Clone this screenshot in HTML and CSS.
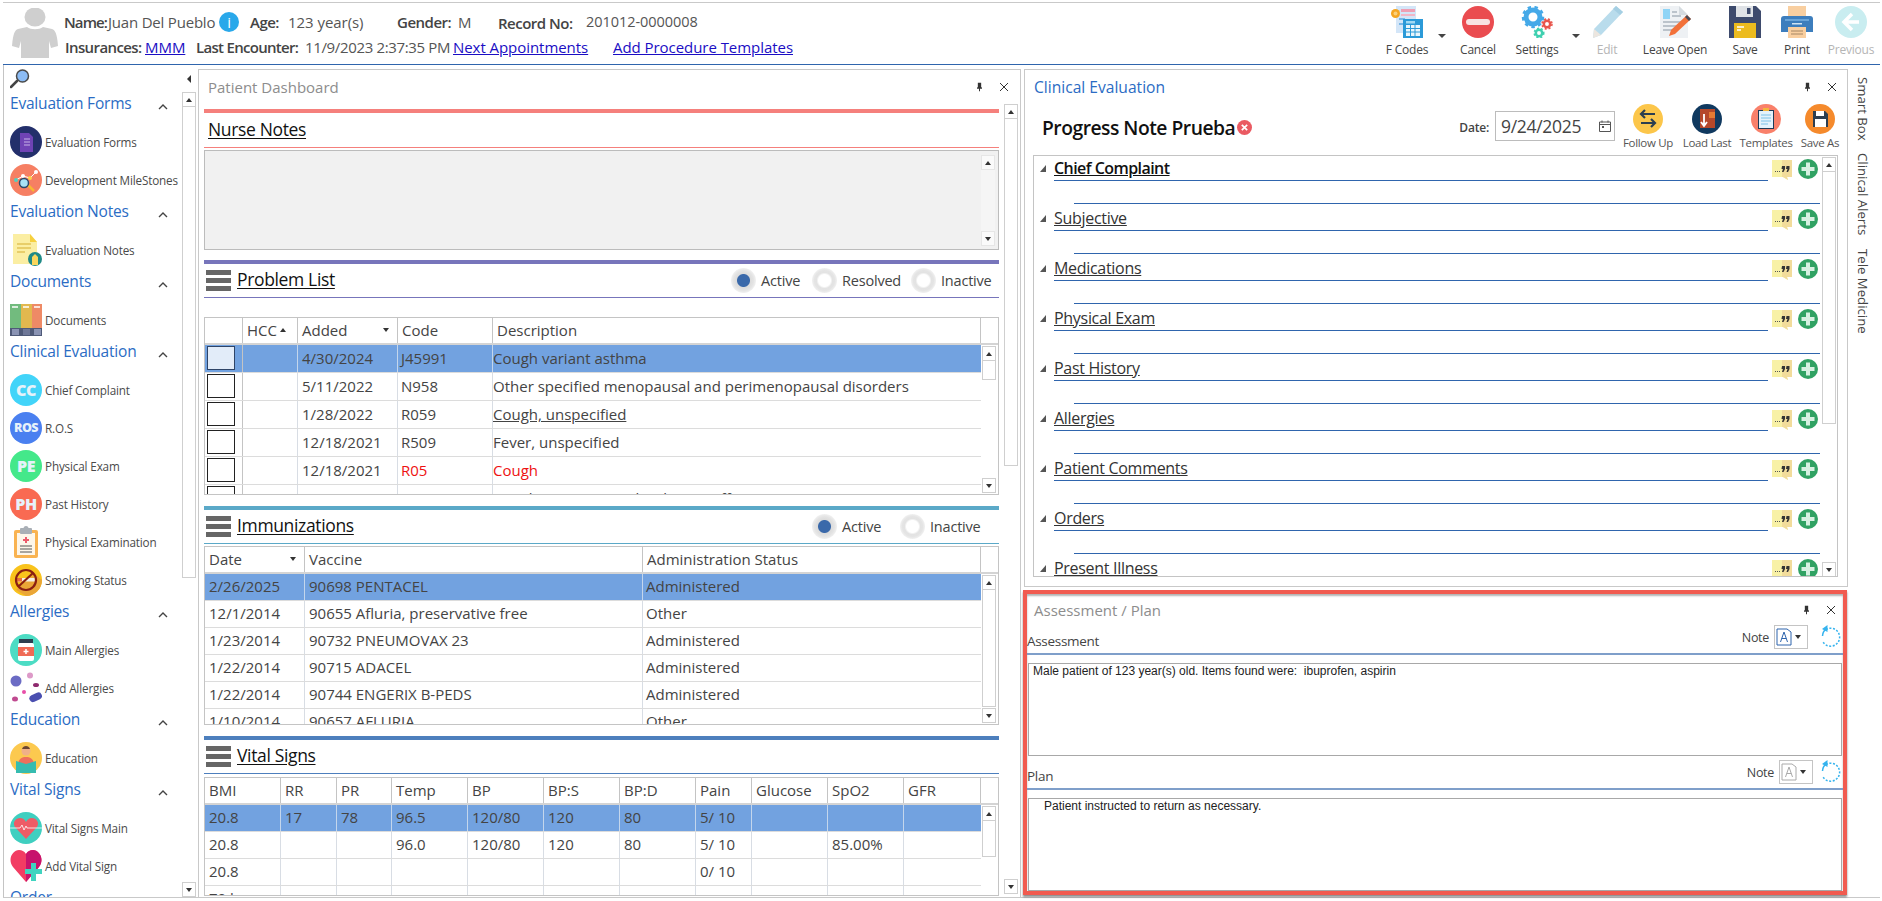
FILE: index.html
```html
<!DOCTYPE html>
<html lang="en">
<head>
<meta charset="utf-8">
<title>Patient Chart</title>
<link rel="stylesheet" href="styles.css">
</head>
<body>
<svg class="defs" width="0" height="0" aria-hidden="true">
  <symbol id="pin" viewBox="0 0 10 12"><path d="M3 1h4v5l1 1v1H5.600v3H4.400V8H2V7l1-1z" fill="#333"/></symbol>
  <symbol id="close" viewBox="0 0 10 10"><path d="M1 1l8 8M9 1L1 9" stroke="#333" stroke-width="1"/></symbol>
  <symbol id="chev" viewBox="0 0 10 6"><path d="M1 5l4-4 4 4" fill="none" stroke="#444" stroke-width="1.400"/></symbol>
  <symbol id="quote" viewBox="0 0 20 20"><path d="M0 0h20v17h-5l1 3-5-3H0z" fill="#f8f1a6"/><path d="M10 0h10v17h-5l1 3-5-3h-1z" fill="#f2dc9b"/><path d="M3 11h1v1H3zm2 0h1v1H5zm2 0h1v1H7z" fill="#555"/><path d="M10 6h3v3l-1.500 3h-1.500l1-3h-1.500zM14.500 6h3v3l-1.500 3h-1.500l1-3h-1.500z" fill="#333"/></symbol>
  <symbol id="plus" viewBox="0 0 20 20"><circle cx="10" cy="10" r="10" fill="#30a263"/><path d="M8 3.500h4V8h4.500v4H12v4.500H8V12H3.500V8H8z" fill="#d6f1e2"/></symbol>
  <symbol id="refresh" viewBox="0 0 22 24"><path d="M6 4.500A9 9 0 1 1 3 17" fill="none" stroke="#35b3ee" stroke-width="1.500" stroke-dasharray="2 1.600"/><path d="M7 3.500A9 9 0 0 0 2.500 11" fill="none" stroke="#35b3ee" stroke-width="1.500"/><path d="M7.500 0v7L2 4z" fill="#35b3ee"/></symbol>
</svg>
<div class="app">
  <header class="topbar">
    <svg class="avatar" viewBox="0 0 46 50"><ellipse cx="23" cy="9" rx="10.500" ry="9.500" fill="#cfcfcf"/><path d="M15 19c4 3 12 3 16 0l9 2c3 1 5 4 6 17l-7 2-2-7v17H9V33l-2 7-7-2C1 25 3 22 6 21z" fill="#cfcfcf"/></svg>
    <div class="patient">
      <div class="pline pline-top">
        <span class="lab lab-name">Name:</span><span class="val val-name">Juan Del Pueblo</span>
        <span class="info">i</span>
        <span class="lab lab-age">Age:</span><span class="val val-age">123 year(s)</span>
        <span class="lab lab-gender">Gender:</span><span class="val val-m">M</span>
        <span class="lab lab-rec">Record No:</span><span class="val val-rec">201012-0000008</span>
      </div>
      <div class="pline pline-bot">
        <span class="lab lab-ins">Insurances:</span><a class="lnk lnk-mmm" href="#">MMM</a>
        <span class="lab lab-last">Last Encounter:</span><span class="val val-date">11/9/2023 2:37:35 PM</span>
        <a class="lnk lnk-next" href="#">Next Appointments</a>
        <a class="lnk" href="#">Add Procedure Templates</a>
      </div>
    </div>
    <nav class="tools">
      <div class="tool t-fcodes">
        <svg viewBox="0 0 32 32"><rect x="5" y="0" width="20" height="27" fill="#d4e6f8"/><rect x="10" y="3" width="14" height="3" fill="#ef9fb4"/><rect x="10" y="8" width="14" height="2" fill="#f2b6c6"/><rect x="8" y="12" width="6" height="2" fill="#7bb7e6"/><rect x="8" y="17" width="6" height="2" fill="#7bb7e6"/><rect x="12" y="13" width="20" height="19" fill="#2b9ad8"/><rect x="15" y="19" width="14" height="11" fill="#e9f6fc"/><path d="M19.500 19v11M24 19v11M15 22.500h14M15 26h14" stroke="#2b9ad8"/><rect x="15" y="15" width="9" height="2.500" fill="#9fd8f3"/><circle cx="4.500" cy="7.500" r="4.500" fill="#f5a623"/><circle cx="4.500" cy="7.500" r="2" fill="#fbd07a"/></svg>
        <span>F Codes</span>
      </div>
      <i class="caret c-f"></i>
      <div class="tool t-cancel">
        <svg viewBox="0 0 32 32"><circle cx="16" cy="16" r="16" fill="#ea4c50"/><rect x="4" y="13" width="24" height="6" rx="3" fill="#f8e3e3"/></svg>
        <span>Cancel</span>
      </div>
      <div class="tool t-settings">
        <svg viewBox="0 0 32 32"><circle cx="12" cy="11" r="7" fill="none" stroke="#45a9e8" stroke-width="5"/><circle cx="12" cy="11" r="10" fill="none" stroke="#45a9e8" stroke-width="2.500" stroke-dasharray="3.500 3.400"/><circle cx="26" cy="18" r="3.200" fill="none" stroke="#e8564d" stroke-width="2.500"/><circle cx="26" cy="18" r="5" fill="none" stroke="#e8564d" stroke-width="1.500" stroke-dasharray="2 2"/><circle cx="18" cy="27" r="3.200" fill="none" stroke="#3fd0b0" stroke-width="2.500"/><circle cx="18" cy="27" r="4.800" fill="none" stroke="#3fd0b0" stroke-width="1.500" stroke-dasharray="2 2"/></svg>
        <span>Settings</span>
      </div>
      <i class="caret c-s"></i>
      <div class="tool t-edit tool-off">
        <svg viewBox="0 0 32 32"><path d="M25 0l7 6L10 29l-8 3 1-9z" fill="#b9dcec"/><path d="M25 0l7 6-3 3-7-6z" fill="#a5cfe3"/><path d="M3 23l7 6-8 3z" fill="#ece6df"/></svg>
        <span>Edit</span>
      </div>
      <div class="tool t-leave">
        <svg viewBox="0 0 32 32"><path d="M1 0h19l9 9v23H1z" fill="#eef1f4"/><path d="M20 0l9 9h-9z" fill="#d5dbe0"/><rect x="4" y="3" width="7" height="10" fill="#8ed4f6"/><path d="M4 16h18M4 20h14M4 24h10M13 6h5M13 10h9" stroke="#aab4bd" stroke-width="1.500"/><path d="M28 9l4 4-16 15-6 2 2-6z" fill="#f2713a"/><path d="M26 11l4 4 2-2-4-4z" fill="#4a4a55"/></svg>
        <span>Leave Open</span>
      </div>
      <div class="tool t-save">
        <svg viewBox="0 0 32 32"><path d="M0 0h27l5 5v27H0z" fill="#3e4b6d"/><rect x="7" y="0" width="17" height="11" fill="#dfe2e6"/><rect x="18" y="2" width="3.500" height="6" fill="#3e4b6d"/><rect x="5" y="17" width="22" height="15" fill="#ecbb1e"/><path d="M8 21h7M8 24h4" stroke="#fff" stroke-width="1.500"/></svg>
        <span>Save</span>
      </div>
      <div class="tool t-print">
        <svg viewBox="0 0 32 32"><rect x="7" y="0" width="18" height="12" fill="#f9cfa0"/><path d="M0 13c0-2 1-3 3-3h26c2 0 3 1 3 3v13H0z" fill="#3d7ebd"/><rect x="4" y="13" width="24" height="2" fill="#6aa5d9"/><rect x="11" y="17" width="10" height="1.500" fill="#cfe3f3"/><rect x="7" y="21" width="18" height="11" fill="#f9cfa0"/><path d="M10 25h12M10 28h12" stroke="#a58664"/></svg>
        <span>Print</span>
      </div>
      <div class="tool t-prev tool-off">
        <svg viewBox="0 0 32 32"><circle cx="16" cy="16" r="16" fill="#c9edf0"/><path d="M17 8l-8 8 8 8M9 16h15" fill="none" stroke="#fff" stroke-width="3.500"/></svg>
        <span>Previous</span>
      </div>
    </nav>
  </header>

  <main class="main">
    <aside class="side">
      <div class="side-top">
        <svg class="search" viewBox="0 0 20 20"><path d="M7 12l-6 6" stroke="#444" stroke-width="2.500" stroke-linecap="round"/><circle cx="12.500" cy="7" r="6" fill="#8cbcf5" stroke="#4a4a4a" stroke-width="1.500"/></svg>
        <i class="side-collapse"></i>
      </div>
      <div class="side-body">
        <div class="navlist">
          <div class="nav-head"><span>Evaluation Forms</span><svg class="chev"><use href="#chev"/></svg></div>
          <div class="nav-item"><svg class="nico" viewBox="0 0 32 32"><circle cx="16" cy="16" r="16" fill="#232f6b"/><path d="M10 7h9l4 4v15H10z" fill="#6f43b5"/><path d="M14 13h6M14 16h6M14 19h6" stroke="#c8b4e8"/></svg><span>Evaluation Forms</span></div>
          <div class="nav-item"><svg class="nico" viewBox="0 0 32 32"><circle cx="16" cy="16" r="16" fill="#f67f63"/><path d="M6 16l7-4 7 2 6-6" fill="none" stroke="#fff"/><circle cx="6" cy="16" r="2" fill="#50d0c0"/><circle cx="13" cy="12" r="2" fill="#fff"/><circle cx="20" cy="14" r="2" fill="#ffd24a"/><circle cx="26" cy="8" r="2" fill="#fff"/><path d="M18 21l6 6" stroke="#f7b733" stroke-width="2.500"/><circle cx="14" cy="19" r="4.500" fill="#a8e2f5" stroke="#2b4a6b" stroke-width="1.500"/></svg><span>Development MileStones</span></div>

          <div class="nav-head"><span>Evaluation Notes</span><svg class="chev"><use href="#chev"/></svg></div>
          <div class="nav-item"><svg class="nico" viewBox="0 0 32 32"><path d="M3 0h17l7 8v22H3z" fill="#fbeea3"/><path d="M20 0l7 8h-7z" fill="#f6d03f"/><path d="M7 10h14M7 14h14M7 18h8" stroke="#e2c458" stroke-width="1.500"/><circle cx="25" cy="25" r="7" fill="#1f8a86"/><path d="M22 31v-8l3-3 3 3v8z" fill="#f9d65c"/></svg><span>Evaluation Notes</span></div>

          <div class="nav-head"><span>Documents</span><svg class="chev"><use href="#chev"/></svg></div>
          <div class="nav-item"><svg class="nico" viewBox="0 0 32 32"><rect width="11" height="24" fill="#72bb7e"/><rect x="11" width="11" height="24" fill="#e2b84e"/><rect x="22" width="10" height="24" fill="#ee8a66"/><rect y="24" width="32" height="8" fill="#4f5a78"/><path d="M2 3h6M13 3h6M24 3h6" stroke="#fff" stroke-width="1.500"/><rect x="2" y="25" width="7" height="6" fill="#8a93b3"/><rect x="13" y="25" width="7" height="6" fill="#6f7898"/><rect x="24" y="25" width="7" height="6" fill="#8a93b3"/></svg><span>Documents</span></div>

          <div class="nav-head"><span>Clinical Evaluation</span><svg class="chev"><use href="#chev"/></svg></div>
          <div class="nav-item"><span class="badge b-cc">CC</span><span>Chief Complaint</span></div>
          <div class="nav-item"><span class="badge b-ros">ROS</span><span>R.O.S</span></div>
          <div class="nav-item"><span class="badge b-pe">PE</span><span>Physical Exam</span></div>
          <div class="nav-item"><span class="badge b-ph">PH</span><span>Past History</span></div>
          <div class="nav-item"><svg class="nico" viewBox="0 0 32 32"><rect x="4" y="4" width="24" height="28" rx="2" fill="#f9b351"/><rect x="7" y="7" width="18" height="22" fill="#fdf6ea"/><rect x="10" y="2" width="12" height="6" rx="1" fill="#a9afb6"/><circle cx="16" cy="2.500" r="2.500" fill="#a9afb6"/><path d="M16 11v6M13 14h6" stroke="#ec5b6c" stroke-width="2"/><path d="M10 20h12M10 23h12M10 26h12" stroke="#555"/></svg><span>Physical Examination</span></div>
          <div class="nav-item"><svg class="nico" viewBox="0 0 32 32"><circle cx="16" cy="16" r="16" fill="#f9c31c"/><path d="M16 32a16 16 0 0 0 16-16l-8-6L6 26z" fill="#eaa637"/><rect x="5" y="14" width="22" height="3.500" fill="#f5f0e6"/><rect x="5" y="14" width="7" height="3.500" fill="#e8703a"/><circle cx="16" cy="16" r="10" fill="none" stroke="#8a1f12" stroke-width="2.200"/><path d="M9 22L23 9" stroke="#8a1f12" stroke-width="2.200"/></svg><span>Smoking Status</span></div>

          <div class="nav-head"><span>Allergies</span><svg class="chev"><use href="#chev"/></svg></div>
          <div class="nav-item"><svg class="nico" viewBox="0 0 32 32"><circle cx="16" cy="16" r="16" fill="#4cdcc4"/><rect x="9" y="5" width="14" height="4" fill="#2c3e50"/><rect x="8" y="9" width="16" height="18" rx="2" fill="#fff"/><rect x="8" y="13" width="16" height="9" fill="#ef6a55"/><path d="M16 15v5M13.500 17.500h5" stroke="#fff" stroke-width="1.500"/></svg><span>Main Allergies</span></div>
          <div class="nav-item"><svg class="nico" viewBox="0 0 32 32"><circle cx="6" cy="9" r="5.500" fill="#6b6bc4"/><circle cx="20" cy="3.500" r="3" fill="#dd9ac8"/><ellipse cx="26" cy="13" rx="3" ry="2" fill="#8e2a6e"/><circle cx="14" cy="20" r="2" fill="#e84fa8"/><ellipse cx="5" cy="27" rx="3" ry="2.500" fill="#c04a90"/><rect x="19" y="22" width="13" height="7" rx="3.500" transform="rotate(-25 25 25)" fill="#4a4fb0"/></svg><span>Add Allergies</span></div>

          <div class="nav-head"><span>Education</span><svg class="chev"><use href="#chev"/></svg></div>
          <div class="nav-item"><svg class="nico" viewBox="0 0 32 32"><circle cx="16" cy="16" r="16" fill="#fcc94f"/><circle cx="16" cy="9" r="4.500" fill="#f0b088"/><path d="M12 7c1-4 7-4 8 0z" fill="#6b4630"/><path d="M8 23c0-6 4-8 8-8s8 2 8 8z" fill="#ee6f5c"/><path d="M6 19l10 3 10-3v12H6z" fill="#36bcb0"/></svg><span>Education</span></div>

          <div class="nav-head"><span>Vital Signs</span><svg class="chev"><use href="#chev"/></svg></div>
          <div class="nav-item"><svg class="nico" viewBox="0 0 32 32"><circle cx="16" cy="16" r="16" fill="#3fcfc0"/><path d="M16 27L5 15c-3-5 1-9 5-9 3 0 5 2 6 4 1-2 3-4 6-4 4 0 8 4 5 9z" fill="#ee5b66"/><path d="M0 16h10l2-3 2 5 2-4 1 2h15" fill="none" stroke="#fff" stroke-width=".8"/></svg><span>Vital Signs Main</span></div>
          <div class="nav-item"><svg class="nico" viewBox="0 0 32 32"><path d="M16 32L3 17C-3 9 3 0 9 0c3 0 5 1 7 4 2-3 4-4 7-4 6 0 12 9 6 17z" fill="#f23d63"/><path d="M16 32V4c2-3 4-4 7-4 6 0 12 9 6 17z" fill="#c7136c"/><path d="M21 13h5v6h6v5h-6v7h-5v-7h-6v-5h6z" fill="#3fd4c0"/></svg><span>Add Vital Sign</span></div>

          <div class="nav-head"><span>Order</span><svg class="chev"><use href="#chev"/></svg></div>
        </div>
        <div class="sb sb-side"><b class="sb-up"></b><b class="sb-thumb th-side"></b><b class="sb-track"></b><b class="sb-down"></b></div>
      </div>
    </aside>

    <section class="panel dash">
      <div class="panel-head">
        <span class="panel-title">Patient Dashboard</span>
        <svg class="pin"><use href="#pin"/></svg><svg class="x"><use href="#close"/></svg>
      </div>
      <div class="dash-body">
        <div class="dash-content">
          <div class="block b-nurse">
            <div class="bhead"><span class="btitle">Nurse Notes</span></div>
            <div class="nursebox"><div class="sb sb-nurse"><b class="sb-up"></b><b class="sb-track"></b><b class="sb-down"></b></div></div>
          </div>

          <div class="block b-prob">
            <div class="bhead">
              <span class="burger"><i></i><i></i><i></i></span><span class="btitle">Problem List</span>
              <div class="radios">
                <span class="radio on"></span><span class="rl rl-a">Active</span>
                <span class="radio"></span><span class="rl rl-r">Resolved</span>
                <span class="radio"></span><span class="rl rl-i">Inactive</span>
              </div>
            </div>
            <div class="tbl tbl-prob">
              <div class="thead g-prob"><span></span><span class="sorted">HCC<i class="tri-up"></i></span><span class="sorted">Added<i class="tri-dn"></i></span><span>Code</span><span>Description</span><span></span></div>
              <div class="tbody">
                <div class="rows">
                  <div class="tr g-prob sel"><span><i class="chk"></i></span><span></span><span>4/30/2024</span><span>J45991</span><span>Cough variant asthma</span></div>
                  <div class="tr g-prob"><span><i class="chk"></i></span><span></span><span>5/11/2022</span><span>N958</span><span>Other specified menopausal and perimenopausal disorders</span></div>
                  <div class="tr g-prob"><span><i class="chk"></i></span><span></span><span>1/28/2022</span><span>R059</span><span class="ul">Cough, unspecified</span></div>
                  <div class="tr g-prob"><span><i class="chk"></i></span><span></span><span>12/18/2021</span><span>R509</span><span>Fever, unspecified</span></div>
                  <div class="tr g-prob"><span><i class="chk"></i></span><span></span><span>12/18/2021</span><span class="red">R05</span><span class="red">Cough</span></div>
                  <div class="tr g-prob"><span><i class="chk"></i></span><span></span><span>5/16/2019</span><span>I340</span><span>Nonrheumatic mitral (valve) insufficiency</span></div>
                </div>
                <div class="sb sb-tbl"><b class="sb-up"></b><b class="sb-thumb th-prob"></b><b class="sb-track"></b><b class="sb-down"></b></div>
              </div>
            </div>
          </div>

          <div class="block b-imm">
            <div class="bhead">
              <span class="burger"><i></i><i></i><i></i></span><span class="btitle">Immunizations</span>
              <div class="radios">
                <span class="radio on"></span><span class="rl rl-a2">Active</span>
                <span class="radio"></span><span class="rl rl-i2">Inactive</span>
              </div>
            </div>
            <div class="tbl tbl-imm">
              <div class="thead g-imm"><span class="sorted">Date<i class="tri-dn"></i></span><span>Vaccine</span><span class="th-status">Administration Status</span><span></span></div>
              <div class="tbody">
                <div class="rows">
                  <div class="tr g-imm sel"><span>2/26/2025</span><span>90698 PENTACEL</span><span>Administered</span></div>
                  <div class="tr g-imm"><span>12/1/2014</span><span>90655 Afluria, preservative free</span><span>Other</span></div>
                  <div class="tr g-imm"><span>1/23/2014</span><span>90732 PNEUMOVAX 23</span><span>Administered</span></div>
                  <div class="tr g-imm"><span>1/22/2014</span><span>90715 ADACEL</span><span>Administered</span></div>
                  <div class="tr g-imm"><span>1/22/2014</span><span>90744 ENGERIX B-PEDS</span><span>Administered</span></div>
                  <div class="tr g-imm"><span>1/10/2014</span><span>90657 AFLURIA</span><span>Other</span></div>
                </div>
                <div class="sb sb-tbl"><b class="sb-up"></b><b class="sb-thumb th-imm"></b><b class="sb-track"></b><b class="sb-down"></b></div>
              </div>
            </div>
          </div>

          <div class="block b-vit">
            <div class="bhead">
              <span class="burger"><i></i><i></i><i></i></span><span class="btitle">Vital Signs</span>
            </div>
            <div class="tbl tbl-vit">
              <div class="thead g-vit"><span>BMI</span><span>RR</span><span>PR</span><span>Temp</span><span>BP</span><span>BP:S</span><span>BP:D</span><span>Pain</span><span>Glucose</span><span>SpO2</span><span>GFR</span><span></span></div>
              <div class="tbody">
                <div class="rows">
                  <div class="tr g-vit sel"><span>20.8</span><span>17</span><span>78</span><span>96.5</span><span>120/80</span><span>120</span><span>80</span><span>5/ 10</span><span></span><span></span><span></span></div>
                  <div class="tr g-vit"><span>20.8</span><span></span><span></span><span>96.0</span><span>120/80</span><span>120</span><span>80</span><span>5/ 10</span><span></span><span>85.00%</span><span></span></div>
                  <div class="tr g-vit"><span>20.8</span><span></span><span></span><span></span><span></span><span></span><span></span><span>0/ 10</span><span></span><span></span><span></span></div>
                  <div class="tr g-vit"><span>70 kg</span><span></span><span></span><span></span><span></span><span></span><span></span><span></span><span></span><span></span><span></span></div>
                </div>
                <div class="sb sb-vit"><b class="sb-up"></b><b class="sb-thumb th-vit"></b><b class="sb-track"></b></div>
              </div>
            </div>
          </div>
        </div>
        <div class="sb sb-dash"><b class="sb-up"></b><b class="sb-thumb th-dash"></b><b class="sb-track"></b><b class="sb-down"></b></div>
      </div>
    </section>

    <div class="rightcol">
      <section class="panel clin">
        <div class="panel-head">
          <span class="panel-title blue">Clinical Evaluation</span>
          <svg class="pin"><use href="#pin"/></svg><svg class="x"><use href="#close"/></svg>
        </div>
        <div class="clin-bar">
          <span class="note-name">Progress Note Prueba</span>
          <svg class="xcirc" viewBox="0 0 14 14"><circle cx="7" cy="7" r="7" fill="#ea5a62"/><path d="M4.500 4.500l5 5M9.500 4.500l-5 5" stroke="#fff" stroke-width="1.600"/></svg>
          <div class="clin-tools">
            <span class="date-lab">Date:</span>
            <div class="datebox"><span>9/24/2025</span><svg viewBox="0 0 12 12"><path d="M.5 2h11v9.500H.5zM.5 4.500h11M3 .5v2M9 .5v2" fill="none" stroke="#555"/><rect x="3" y="6" width="2" height="2" fill="#555"/></svg></div>
            <div class="act a-wide"><svg viewBox="0 0 30 30"><circle cx="15" cy="15" r="15" fill="#fcc64a"/><path d="M22 10H9m3-4l-4 4 4 4M8 19h13m-3-4l4 4-4 4" fill="none" stroke="#2c3e50" stroke-width="2.200"/></svg><span>Follow Up</span></div>
            <div class="act a-wide"><svg viewBox="0 0 30 30"><circle cx="15" cy="15" r="15" fill="#10395f"/><rect x="8" y="5" width="15" height="19" fill="#b5482a"/><rect x="17" y="8" width="6" height="6" fill="#e57a33"/><path d="M12 10v11m-3-3l3 4 3-4" fill="none" stroke="#fff" stroke-width="1.800"/></svg><span>Load Last</span></div>
            <div class="act a-wide"><svg viewBox="0 0 30 30"><circle cx="15" cy="15" r="15" fill="#f9806a"/><rect x="7" y="6" width="16" height="19" fill="#1f3b57"/><rect x="8" y="7" width="14" height="17" fill="#e4f2fb"/><rect x="12" y="4" width="6" height="3" fill="#f4b63c"/><path d="M10 11h10M10 14h10M10 17h10M10 20h7" stroke="#7cc2e8"/></svg><span>Templates</span></div>
            <div class="act a-last"><svg viewBox="0 0 30 30"><circle cx="15" cy="15" r="15" fill="#f58a2c"/><path d="M8 7h12l3 3v13H8z" fill="#2c3e50"/><rect x="11" y="7" width="8" height="5" fill="#fff"/><rect x="10" y="15" width="11" height="8" fill="#fff"/></svg><span>Save As</span></div>
          </div>
        </div>
        <div class="cat-box">
          <div class="cats">
            <div class="cat first"><i class="tri"></i><span class="cat-t"><u>Chief Complaint</u></span><svg class="q"><use href="#quote"/></svg><svg class="p"><use href="#plus"/></svg><div class="cat-l"></div></div>
            <div class="cat"><i class="tri"></i><span class="cat-t"><u>Subjective</u></span><svg class="q"><use href="#quote"/></svg><svg class="p"><use href="#plus"/></svg><div class="cat-l"></div></div>
            <div class="cat"><i class="tri"></i><span class="cat-t"><u>Medications</u></span><svg class="q"><use href="#quote"/></svg><svg class="p"><use href="#plus"/></svg><div class="cat-l"></div></div>
            <div class="cat"><i class="tri"></i><span class="cat-t"><u>Physical Exam</u></span><svg class="q"><use href="#quote"/></svg><svg class="p"><use href="#plus"/></svg><div class="cat-l"></div></div>
            <div class="cat"><i class="tri"></i><span class="cat-t"><u>Past History</u></span><svg class="q"><use href="#quote"/></svg><svg class="p"><use href="#plus"/></svg><div class="cat-l"></div></div>
            <div class="cat"><i class="tri"></i><span class="cat-t"><u>Allergies</u></span><svg class="q"><use href="#quote"/></svg><svg class="p"><use href="#plus"/></svg><div class="cat-l"></div></div>
            <div class="cat"><i class="tri"></i><span class="cat-t"><u>Patient Comments</u></span><svg class="q"><use href="#quote"/></svg><svg class="p"><use href="#plus"/></svg><div class="cat-l"></div></div>
            <div class="cat"><i class="tri"></i><span class="cat-t"><u>Orders</u></span><svg class="q"><use href="#quote"/></svg><svg class="p"><use href="#plus"/></svg><div class="cat-l"></div></div>
            <div class="cat"><i class="tri"></i><span class="cat-t"><u>Present Illness</u></span><svg class="q"><use href="#quote"/></svg><svg class="p"><use href="#plus"/></svg><div class="cat-l"></div></div>
          </div>
          <div class="sb sb-cat"><b class="sb-up"></b><b class="sb-thumb th-cat"></b><b class="sb-track"></b><b class="sb-down"></b></div>
        </div>
      </section>

      <section class="assess">
        <div class="panel-head ap-head">
          <span class="panel-title">Assessment / Plan</span>
          <svg class="pin"><use href="#pin"/></svg><svg class="x"><use href="#close"/></svg>
        </div>
        <div class="note-row nr-a">
          <span class="nr-label">Assessment</span>
          <span class="nr-note">Note</span>
          <span class="nr-drop active"><svg class="nf" viewBox="0 0 16 18"><path d="M1 1h10l4 3v13H1z" fill="#fff" stroke="currentColor"/><path d="M4.500 14L8 4l3.500 10M5.700 10.500h4.600" fill="none" stroke="currentColor"/></svg><i class="tri-dn"></i></span>
          <svg class="rf"><use href="#refresh"/></svg>
        </div>
        <div class="tarea">Male patient of 123 year(s) old. Items found were:&nbsp; ibuprofen, aspirin</div>
        <div class="note-row nr-p">
          <span class="nr-label">Plan</span>
          <span class="nr-note">Note</span>
          <span class="nr-drop dim"><svg class="nf" viewBox="0 0 16 18"><path d="M1 1h10l4 3v13H1z" fill="#fff" stroke="currentColor"/><path d="M4.500 14L8 4l3.500 10M5.700 10.500h4.600" fill="none" stroke="currentColor"/></svg><i class="tri-dn"></i></span>
          <svg class="rf"><use href="#refresh"/></svg>
        </div>
        <div class="tarea ta-plan">Patient instructed to return as necessary.</div>
      </section>
    </div>

    <div class="sidetabs">
      <span class="tab t1">Smart Box</span>
      <span class="tab t2">Clinical Alerts</span>
      <span class="tab t3">Tele Medicine</span>
    </div>
  </main>
</div>
</body>
</html>
```

FILE: styles.css
```css
* { box-sizing: border-box; }
html, body { margin: 0; padding: 0; background: #fff; }
body { font-family: "Open Sans", "Noto Sans", sans-serif; color: #444; overflow: hidden; }
.defs { position: absolute; }
.app { width: 1882px; height: 901px; padding: 2px 2px 3px 3px; display: flex; flex-direction: column; }

/* top bar */
.topbar { height: 63px; flex: none; border-top: 1px solid #c9c9c9; border-bottom: 1px solid #2f65ad; display: flex; }
.avatar { width: 46px; height: 50px; margin: 5px 0 0 9px; flex: none; }
.patient { margin-left: 6px; flex: none; font-size: 15px; letter-spacing: -.05px; }
.pline { display: flex; align-items: center; height: 25px; white-space: nowrap; }
.pline-top { margin-top: 6px; }
.lab { font-weight: 600; color: #444; letter-spacing: -.5px; }
.val { color: #555; }
.lab-name { width: 44px; letter-spacing: -.9px; }
.val-name { width: 111px; letter-spacing: -.2px; }
.info { width: 20px; height: 20px; border-radius: 50%; background: #29a8ea; color: #fff; font-size: 15px; line-height: 20px; text-align: center; flex: none; }
.lab-age { margin-left: 11px; width: 38px; }
.val-age { width: 109px; }
.lab-gender { width: 61px; }
.val-m { width: 40px; }
.lab-rec { width: 88px; margin-top: 3px; }
.val-rec { font-size: 14.500px; }
.lnk { color: #1a0dc4; text-decoration: underline; }
.lab-ins { width: 80px; margin-left: 1px; letter-spacing: -.6px; }
.lnk-mmm { width: 51px; }
.lab-last { width: 109px; letter-spacing: -.7px; }
.val-date { width: 148px; letter-spacing: -.35px; }
.lnk-next { width: 160px; }

.tools { margin-left: auto; display: flex; flex: none; }
.tool { display: flex; flex-direction: column; align-items: center; flex: none; padding-top: 3px; font-size: 12px; letter-spacing: -.2px; color: #444; }
.tool svg { width: 32px; height: 32px; display: block; }
.tool span { margin-top: 4px; line-height: 16px; white-space: nowrap; }
.tool-off { color: #b5b5b5; }
.t-fcodes { width: 60px; }
.t-cancel { width: 50px; }
.t-settings { width: 60px; margin-left: 4px; }
.t-edit { width: 40px; }
.t-leave { width: 76px; margin-left: 10px; }
.t-save { width: 44px; margin-left: 10px; }
.t-print { width: 44px; margin-left: 8px; }
.t-prev { width: 54px; margin-left: 5px; margin-right: 2px; }
.caret { width: 8px; height: 4px; border: 4px solid transparent; border-top: 4px solid #444; border-bottom: 0; margin-top: 31px; flex: none; }
.c-f { margin-left: 1px; margin-right: 7px; }
.c-s { margin-left: 5px; margin-right: 7px; }

/* layout */
.main { flex: 1; display: flex; border-bottom: 1px solid #c9c9c9; min-height: 0; }
.side { width: 195px; flex: none; border-left: 1px solid #c4c4c4; display: flex; flex-direction: column; }
.side-top { height: 27px; flex: none; display: flex; align-items: flex-start; }
.search { width: 20px; height: 20px; margin: 4px 0 0 6px; }
.side-collapse { margin: 10px 0 0 157px; width: 0; height: 0; border: 4px solid transparent; border-right: 4px solid #333; border-left: 0; }
.side-body { flex: 1; display: flex; min-height: 0; }
.navlist { width: 177px; flex: none; overflow: hidden; padding-top: 2px; }
.nav-head { height: 32px; display: flex; padding: 0 13px 0 6px; font-size: 15.500px; line-height: 18px; letter-spacing: -.2px; color: #2b6cc4; }
.chev { width: 10px; height: 6px; margin: 10px 0 0 auto; }
.nav-item { height: 38px; display: flex; padding-left: 6px; font-size: 11.700px; letter-spacing: -.15px; color: #4a4a4a; white-space: nowrap; }
.nav-item > span:last-child { margin-left: 3px; line-height: 33px; }
.nico, .badge { width: 32px; height: 32px; flex: none; display: block; }
.badge { border-radius: 50%; color: #e6f2fa; font-weight: 800; font-size: 16px; line-height: 32px; text-align: center; letter-spacing: -.5px; }
.b-cc { background: #42d4f9; }
.b-ros { background: #4a80f0; font-size: 12.500px; }
.b-pe { background: #44e88a; }
.b-ph { background: #f96a52; }

/* scrollbars */
.sb { display: flex; flex-direction: column; flex: none; width: 14px; }
.sb b { display: flex; align-items: center; justify-content: center; flex: none; }
.sb-up, .sb-down { height: 15px; border: 1px solid #cfcfcf; }
.sb-up::before { content: ""; border: 3.500px solid transparent; border-bottom: 4px solid #333; border-top: 0; }
.sb-down::before { content: ""; border: 3.500px solid transparent; border-top: 4px solid #333; border-bottom: 0; }
.sb .sb-track { flex: 1; }
.sb-thumb { border: 1px solid #cfcfcf; border-top: 0; }
.sb-side { margin-left: 1px; height: 805px; }
.th-side { height: 471px; }

/* panels */
.panel { border: 1px solid #c9c9c9; background: #fff; }
.panel-head { height: 34px; flex: none; display: flex; align-items: center; padding-left: 9px; }
.panel-title { font-size: 15px; color: #8d8d8d; }
.blue { color: #2b6cc4; font-size: 15.600px; }
.pin { width: 9px; height: 10px; margin-left: auto; }
.x { width: 10px; height: 10px; margin-left: 15px; margin-right: 11px; }
.dash { width: 823px; flex: none; margin-top: 4px; display: flex; flex-direction: column; border-bottom: 0; }
.dash-body { flex: 1; min-height: 0; display: flex; }
.dash-content { width: 795px; margin-left: 5px; flex: none; overflow: hidden; }
.sb-dash { margin-left: 5px; height: 790px; }
.th-dash { height: 347px; }

.block { margin-top: 10px; border-top: 4px solid #000; }
.b-nurse { margin-top: 5px; border-top-color: #f5807c; }
.b-prob { border-top-color: #7775bb; }
.b-imm { margin-top: 11px; border-top-color: #5ba9c8; }
.b-vit { margin-top: 11px; border-top-color: #4d7fbd; }
.bhead { height: 34px; display: flex; align-items: center; border-bottom: 1px solid #000; padding-left: 2px; }
.b-nurse .bhead { border-bottom-color: #f5807c; height: 35px; padding-left: 4px; }
.b-prob .bhead { border-bottom-color: #7775bb; }
.b-imm .bhead { border-bottom-color: #5ba9c8; }
.b-vit .bhead { border-bottom-color: #4d7fbd; }
.btitle { font-size: 17.500px; letter-spacing: -.35px; color: #111; text-decoration: underline; text-underline-offset: 2px; padding-bottom: 3px; }
.burger { display: flex; flex-direction: column; gap: 3px; width: 25px; margin-right: 6px; flex: none; }
.burger i { display: block; height: 5px; background: #666; }
.nursebox { margin-top: 2px; height: 100px; background: #f1f1f1; border: 1px solid #bcbcbc; display: flex; justify-content: flex-end; padding: 4px 3px 3px 0; }
.sb-nurse { background: #f5f5f5; }
.sb-nurse .sb-up, .sb-nurse .sb-down { background: #fafafa; border-color: #e6e6e6; }

.radios { margin-left: auto; display: flex; align-items: center; font-size: 14.500px; letter-spacing: -.2px; color: #444; }
.radio { width: 25px; height: 25px; border-radius: 50%; background: radial-gradient(circle, #fff 0 6px, #e3e3e3 8px, #e4e4e4 10px, #f1f1f1 12.500px); flex: none; margin-right: 5px; }
.radio.on { background: radial-gradient(circle, #3a69aa 0 6px, #dcdcdc 7px, #e4e4e4 10px, #f1f1f1 12.500px); }
.rl-a { width: 51px; }
.rl-r { width: 69px; }
.rl-i { width: 58px; }
.rl-a2 { width: 58px; }
.rl-i2 { width: 69px; }

.tbl { border: 1px solid #c4c4c4; display: flex; flex-direction: column; overflow: hidden; font-size: 15px; color: #444; }
.tbl-prob { margin-top: 19px; height: 178px; }
.tbl-imm { margin-top: 2px; height: 179px; }
.tbl-vit { margin-top: 3px; height: 119px; }
.thead { height: 27px; flex: none; display: grid; border-bottom: 2px solid #d4d4d4; line-height: 25px; }
.thead > span { border-right: 1px solid #c4c4c4; padding-left: 4px; position: relative; white-space: nowrap; }
.thead > span:last-child { border-right: 0; }
.tbody { flex: 1; display: flex; min-height: 0; }
.rows { flex: 1; min-width: 0; overflow: hidden; }
.tr { display: grid; border-bottom: 1px solid #dcdcdc; white-space: nowrap; }
.tr > span { border-right: 1px solid #d8dde4; padding-left: 4px; overflow: hidden; }
.tr > span:last-child { border-right: 0; }
.tr.sel { background: #72a2e0; }
.tr.sel > span { border-right-color: #c4d6ec; }
.g-prob { grid-template-columns: 38px 55px 100px 95px 1fr; }
.thead.g-prob { grid-template-columns: 38px 55px 100px 95px 1fr 17px; }
.g-imm { grid-template-columns: 100px 338px 1fr; }
.thead.g-imm { grid-template-columns: 100px 338px 1fr 17px; }
.g-vit { grid-template-columns: 76px 56px 55px 76px 76px 76px 76px 56px 76px 76px 1fr; }
.thead.g-vit { grid-template-columns: 76px 56px 55px 76px 76px 76px 76px 56px 76px 76px 1fr 17px; }
.tbl-prob .tr { height: 28px; line-height: 26px; }
.tbl-imm .tr, .tbl-vit .tr { height: 27px; line-height: 25px; }
.tbl-prob .tr > span:nth-child(1) { padding: 1px 0 0 2px; border-right-color: #c4c4c4; }
.tbl-prob .tr > span:nth-child(4) { padding-left: 3px; }
.tbl-prob .tr > span:nth-child(5) { padding-left: 0; }
.tbl-imm .tr > span:nth-child(3) { padding-left: 3px; }
.th-status { padding-left: 5px; }
.chk { display: block; width: 28px; height: 24px; border: 1px solid #222; background: #fff; }
.sel .chk { background: #e2ecf9; border-color: #2e4468; }
.ul { text-decoration: underline; }
.red { color: #ee1111; }
.tri-up, .tri-dn { display: inline-block; width: 0; height: 0; border: 3.500px solid transparent; flex: none; }
.tri-up { border-bottom: 4px solid #333; border-top: 0; margin-left: 3px; vertical-align: 4px; }
.tri-dn { border-top: 4px solid #333; border-bottom: 0; }
.sorted .tri-dn { position: absolute; right: 8px; top: 10px; }
.sb-tbl { margin: 1px 2px 1px 1px; }
.sb-vit { margin: 1px 2px 0 1px; }
.th-prob { height: 19px; }
.th-imm { height: 117px; }
.th-vit { height: 36px; }

/* right column */
.rightcol { width: 824px; flex: none; margin-left: 3px; display: flex; flex-direction: column; }
.clin { margin-top: 4px; height: 518px; display: flex; flex-direction: column; }
.clin .x { margin-right: 10px; }
.clin-bar { height: 51px; flex: none; display: flex; padding-left: 17px; }
.note-name { font-size: 19.300px; font-weight: 600; letter-spacing: -.5px; color: #111; margin-top: 11px; line-height: 26px; }
.xcirc { width: 15px; height: 15px; margin: 16px 0 0 2px; flex: none; }
.clin-tools { margin-left: auto; display: flex; padding-right: 7px; }
.date-lab { font-size: 12px; font-weight: 600; color: #444; margin: 15px 6px 0 0; line-height: 18px; letter-spacing: -.2px; }
.datebox { width: 120px; height: 30px; margin-top: 7px; border: 1px solid #bcbcbc; display: flex; align-items: center; padding: 0 3px 0 5px; font-size: 17.500px; letter-spacing: -.3px; color: #444; margin-right: 8px; }
.datebox svg { width: 12px; height: 12px; margin-left: auto; }
.act { display: flex; flex-direction: column; align-items: center; width: 50px; margin-right: 9px; font-size: 11.500px; letter-spacing: -.3px; color: #555; white-space: nowrap; }
.act svg { width: 30px; height: 30px; flex: none; }
.act span { line-height: 16px; margin-top: 1px; }
.a-last { width: 40px; margin-right: 0; }
.cat-box { width: 805px; height: 422px; margin-left: 8px; flex: none; border: 1px solid #c4c4c4; display: flex; overflow: hidden; }
.cats { width: 788px; flex: none; overflow: hidden; }
.cat { display: grid; grid-template-columns: 10px 714px 20px 20px; height: 50px; padding-left: 6px; grid-template-rows: 25px 23px; }
.tri { width: 0; height: 0; border-style: solid; border-width: 0 0 7px 6px; border-color: transparent transparent #555 transparent; align-self: center; justify-self: start; }
.cat-t { grid-column: 2; margin-left: 4px; border-bottom: 1px solid #2f65ad; font-size: 16px; letter-spacing: -.3px; color: #333; line-height: 24px; width: 714px; }
.first .cat-t { color: #111; font-weight: 600; letter-spacing: -.55px; }
.q { width: 20px; height: 20px; margin-left: 8px; margin-top: 4px; grid-column: 3; }
.p { width: 20px; height: 20px; margin-left: 14px; margin-top: 3px; grid-column: 4; }
.cat-l { grid-column: 2 / 5; grid-row: 2; margin-left: 24px; margin-right: -16px; border-bottom: 1px solid #2f65ad; }
.sb-cat { margin: 1px 1px 0 0; height: 420px; }
.th-cat { height: 252px; }

.assess { margin: 3px 1px 2px -1px; height: 305px; border: 4px solid #f15b50; box-shadow: 0 2px 2px rgba(0,0,0,.45), inset 0 2px 2px rgba(0,0,0,.3); display: flex; flex-direction: column; }
.ap-head { height: 31px; padding-left: 7px; }
.ap-head .x { margin-right: 7px; }
.note-row { display: flex; align-items: flex-start; border-bottom: 2px solid #7f9fca; font-size: 12.500px; letter-spacing: -.3px; color: #444; padding-right: 1px; flex: none; }
.nr-a { height: 30px; margin-bottom: 8px; }
.nr-p { height: 34px; padding-top: 4px; margin-bottom: 8px; }
.nr-label { align-self: flex-end; line-height: 22px; margin-bottom: 1px; font-size: 13.500px; }
.nr-note { margin-left: auto; line-height: 26px; }
.nr-drop { width: 34px; height: 24px; margin-left: 5px; border: 1px solid #c4c4c4; display: flex; align-items: center; padding-left: 1px; gap: 3px; }
.nf { width: 16px; height: 18px; }
.active { color: #2f65ad; }
.dim { color: #aaa; }
.rf { width: 22px; height: 24px; margin-left: 12px; }
.nr-p .rf { margin-left: 7px; }
.tarea { flex: none; margin-left: 1px; margin-right: 1px; height: 93px; border: 1px solid #a8a8a8; font-family: "Liberation Sans", Arial, sans-serif; font-size: 12px; color: #222; padding: 0 4px; line-height: 14px; }
.ta-plan { padding-left: 15px; }

.sidetabs { width: 32px; flex: none; display: flex; flex-direction: column; align-items: flex-start; padding: 12px 0 0 7px; font-size: 13.200px; color: #444; white-space: nowrap; }
.tab { writing-mode: vertical-rl; line-height: 16px; }
.t2 { margin-top: 12px; }
.t3 { margin-top: 14px; }
```
